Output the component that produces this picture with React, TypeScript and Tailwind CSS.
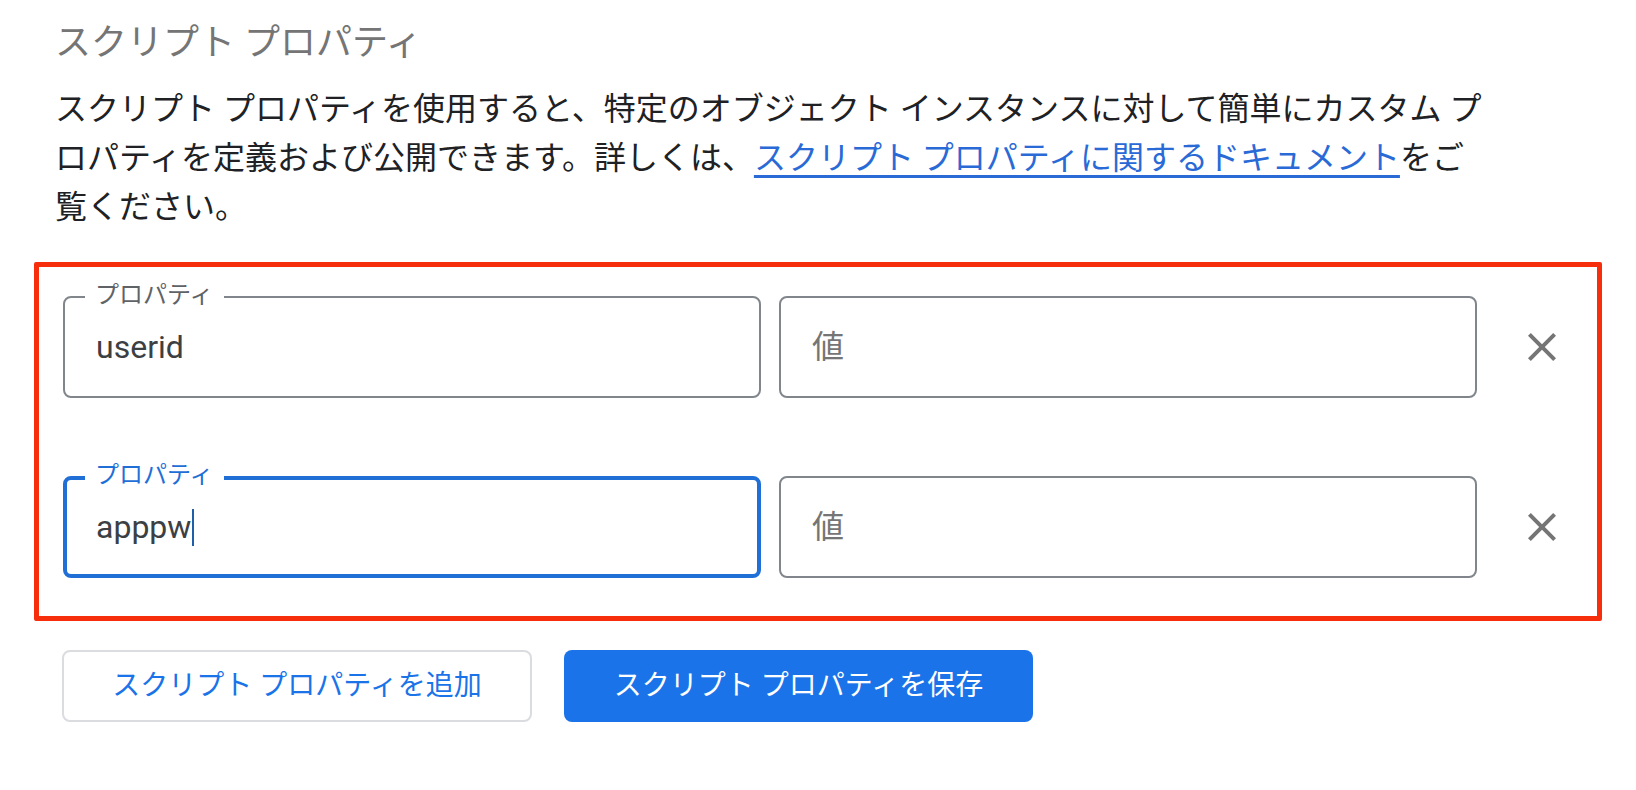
import { Fragment } from "react";

const font = "font-['Roboto','Noto_Sans_CJK_JP',sans-serif]";

const CloseIcon = () => (
  <svg width="48" height="48" viewBox="0 0 24 24" fill="#757575">
    <path d="M19 6.41L17.59 5 12 10.59 6.41 5 5 6.41 10.59 12 5 17.59 6.41 19 12 13.41 17.59 19 19 17.59 13.41 12z" />
  </svg>
);

type RowProps = { name: string; focused?: boolean };

const PropertyRow = ({ name, focused }: RowProps) => (
  <div className="flex items-center">
    <div
      className={
        focused
          ? "relative flex h-[102px] w-[698px] items-center rounded-[8px] border-[4px] border-[#1f6fd6] px-[29px]"
          : "relative flex h-[102px] w-[698px] items-center rounded-[8px] border-2 border-[#80868b] px-[31px]"
      }
    >
      <span
        className={
          focused
            ? "absolute top-[-20px] left-[18px] bg-white px-[10px] text-[24px] leading-[30px] text-[#1f6fd6]"
            : "absolute top-[-18px] left-[20px] bg-white px-[10px] text-[24px] leading-[30px] text-[#5f6368]"
        }
      >
        プロパティ
      </span>
      <span className="text-[32px] text-[#3c4043]">{name}</span>
      {focused && <span className="ml-[1px] h-[37px] w-[2px] bg-[#1f5fa8]" />}
    </div>
    <div className="ml-[18px] flex h-[102px] w-[698px] items-center rounded-[8px] border-2 border-[#80868b] px-[31px]">
      <span className="text-[32px] text-[#757575]">値</span>
    </div>
    <button type="button" className="ml-[41px] flex items-center justify-center">
      <CloseIcon />
    </button>
  </div>
);

export default function App() {
  const rows = [{ name: "userid" }, { name: "apppw", focused: true }];

  return (
    <div className={`${font} min-h-[790px] bg-white px-[34px] pt-[18px]`}>
      <h2 className="pl-[21px] text-[36px] leading-[50px] font-normal text-[#757575]">
        スクリプト プロパティ
      </h2>
      <p className="mt-[17px] max-w-[1461px] pl-[21px] text-[32px] leading-[49px] text-[#202124]">
        スクリプト
        プロパティを使用すると、特定のオブジェクト
        インスタンスに対して簡単にカスタム
        プロパティを定義および公開できます。詳しくは、
        <a
          href="#"
          className="text-[#2a6ad6] underline decoration-[3px] underline-offset-[6px]"
        >
          スクリプト プロパティに関するドキュメント
        </a>
        をご覧ください。
      </p>
      <div className="mt-[30px] w-[1568px] rounded-[2px] border-[5px] border-[#f72e0c] pt-[29px] pr-[24px] pb-[38px] pl-[24px]">
        {rows.map((r, i) => (
          <Fragment key={r.name}>
            {i > 0 && <div className="h-[78px]" />}
            <PropertyRow name={r.name} focused={r.focused} />
          </Fragment>
        ))}
      </div>
      <div className="mt-[29px] flex gap-[32px] pl-[28px]">
        <button
          type="button"
          className="h-[72px] w-[470px] rounded-[8px] border-2 border-[#dadce0] bg-white text-[28px] text-[#1a73e8]"
        >
          スクリプト プロパティを追加
        </button>
        <button
          type="button"
          className="h-[72px] w-[469px] rounded-[8px] bg-[#1a73e8] text-[28px] text-white"
        >
          スクリプト プロパティを保存
        </button>
      </div>
    </div>
  );
}
